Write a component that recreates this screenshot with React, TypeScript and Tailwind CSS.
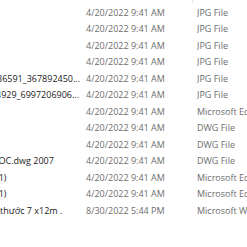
const rows = [
  { name: '', nameCls: 'ml-0', date: '4/20/2022 9:41 AM', type: 'JPG File' },
  { name: '', nameCls: 'ml-0', date: '4/20/2022 9:41 AM', type: 'JPG File' },
  { name: '', nameCls: 'ml-0', date: '4/20/2022 9:41 AM', type: 'JPG File' },
  { name: '', nameCls: 'ml-0', date: '4/20/2022 9:41 AM', type: 'JPG File' },
  { name: '36591_367892450...', nameCls: '-ml-[3px]', date: '4/20/2022 9:41 AM', type: 'JPG File' },
  { name: '4929_6997206906...', nameCls: '-ml-[4px]', date: '4/20/2022 9:41 AM', type: 'JPG File' },
  { name: '', nameCls: 'ml-0', date: '4/20/2022 9:41 AM', type: 'Microsoft Edge HTML Document' },
  { name: '', nameCls: 'ml-0', date: '4/20/2022 9:41 AM', type: 'DWG File' },
  { name: '', nameCls: 'ml-0', date: '4/20/2022 9:41 AM', type: 'DWG File' },
  { name: 'DOC.dwg 2007', nameCls: '-ml-[8px]', date: '4/20/2022 9:41 AM', type: 'DWG File' },
  { name: '(1)', nameCls: '-ml-[4px]', date: '4/20/2022 9:41 AM', type: 'Microsoft Edge PDF Document' },
  { name: '(1)', nameCls: '-ml-[4px]', date: '4/20/2022 9:41 AM', type: 'Microsoft Edge PDF Document' },
  { name: 'thước 7 x12m .', nameCls: 'ml-0', date: '8/30/2022 5:44 PM', type: 'Microsoft Word Document' },
];

export default function App() {
  return (
    <div className="w-[247px] h-[247px] overflow-hidden bg-white font-['Open_Sans',sans-serif] text-[9px]">
      <div className="flex h-[4px]">
        <div className="w-[192px]" />
        <div className="w-px h-[3px] bg-[#e5e5e5]" />
      </div>
      {rows.map((r, i) => (
        <div key={i} className="flex items-center h-[16.5px] whitespace-nowrap">
          <div className="w-[86px] overflow-hidden">
            <span className={`block ${r.nameCls} text-[#1a1a1a]`}>{r.name}</span>
          </div>
          <div className="w-[111px] text-[#6d6d6d]">{r.date}</div>
          <div className="flex-1 text-[#6d6d6d] overflow-hidden">{r.type}</div>
        </div>
      ))}
    </div>
  );
}
